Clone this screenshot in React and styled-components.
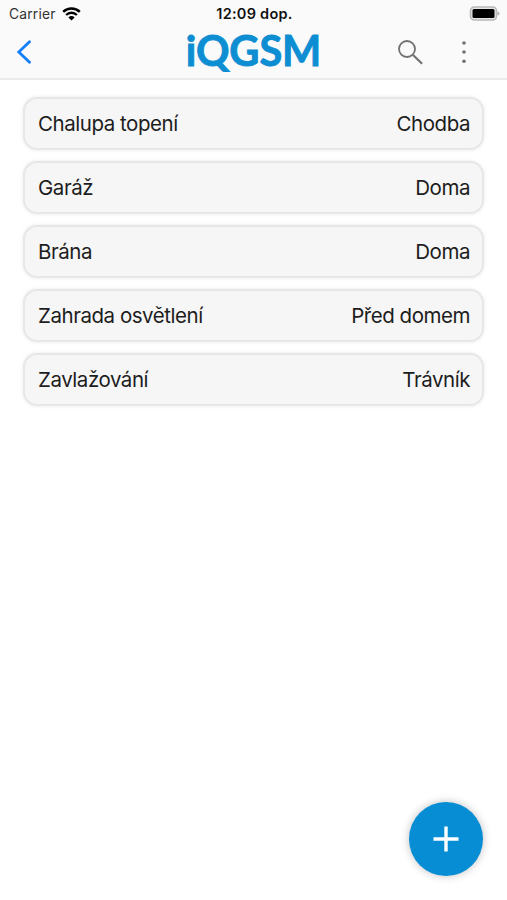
import React from 'react'
import styled, { createGlobalStyle } from 'styled-components'

const GlobalStyle = createGlobalStyle`
  * {
    box-sizing: border-box;
  }

  body {
    margin: 0;
    background: #fff;
    color: #1d1d1d;
    font-family: Inter, 'Liberation Sans', sans-serif;
  }

  button {
    padding: 0;
    border: none;
    background: none;
    cursor: pointer;
  }

  svg {
    display: block;
  }
`

const Screen = styled.div`
  height: 900px;
  overflow: hidden;
`

const Header = styled.header`
  height: 80px;
  background: #fafafa;
  border-bottom: 2px solid #ebebeb;
`

const StatusBar = styled.div`
  display: grid;
  grid-template-columns: 1fr auto 1fr;
  align-items: center;
  height: 27px;
  padding: 0 7px 0 9px;
`

const Carrier = styled.div`
  display: flex;
  align-items: center;
  gap: 6px;
  color: #333;
  font-size: 13.8px;
  letter-spacing: 0.2px;
`

const Clock = styled.div`
  color: #111;
  font-size: 14.5px;
  font-weight: 600;
  letter-spacing: 0.25px;
`

const Battery = styled.div`
  justify-self: end;
`

const NavBar = styled.nav`
  display: grid;
  grid-template-columns: 1fr auto 1fr;
  height: 51px;
  padding: 1px 40px 0 16px;
`

const BackButton = styled.button`
  justify-self: start;
  width: 18px;
  height: 48px;
`

const Logo = styled.h1`
  margin: 0;
  padding-left: 24px;
  color: #0d8dd2;
  font-family: Lato, 'Open Sans', sans-serif;
  font-size: 41.5px;
  font-weight: 700;
  line-height: 44px;
  letter-spacing: -0.1px;
  -webkit-text-stroke: 0.9px #0d8dd2;
`

const Actions = styled.div`
  display: flex;
  justify-content: flex-end;
  gap: 38px;
`

const IconButton = styled.button`
  height: 48px;
`

const DeviceList = styled.ul`
  display: flex;
  flex-direction: column;
  gap: 11px;
  margin: 0;
  padding: 17px 23px;
  list-style: none;
`

const DeviceRow = styled.li`
  display: flex;
  align-items: center;
  justify-content: space-between;
  height: 53px;
  padding: 0 12px 0 13px;
  background: #f6f6f6;
  border: 2px solid #e7e7e7;
  border-radius: 14px;
  box-shadow: 0 0 4px rgba(0, 0, 0, 0.08);
  font-size: 20.5px;
  letter-spacing: -0.46px;
`

const DeviceName = styled.span`
  white-space: nowrap;
`

const AddButton = styled.button`
  position: fixed;
  right: 24px;
  bottom: 24px;
  display: grid;
  place-items: center;
  width: 74px;
  height: 74px;
  border-radius: 50%;
  background: #068dd4;
  box-shadow: 0 0 9px rgba(0, 0, 0, 0.25);
`

const devices = [
  { name: 'Chalupa topení', place: 'Chodba' },
  { name: 'Garáž', place: 'Doma' },
  { name: 'Brána', place: 'Doma' },
  { name: 'Zahrada osvětlení', place: 'Před domem' },
  { name: 'Zavlažování', place: 'Trávník' },
]

const WifiIcon = () => (
  <svg width="19" height="14" viewBox="0 0 19 14" fill="none" stroke="#000">
    <path d="M1.2 4.9a11.8 11.8 0 0 1 16.6 0" strokeWidth="2.5" />
    <path d="M4.1 8a7.6 7.6 0 0 1 10.8 0" strokeWidth="2.3" />
    <path d="M9.5 13.6 6.4 10.4a4.4 4.4 0 0 1 6.2 0z" fill="#000" stroke="none" />
  </svg>
)

const BatteryIcon = () => (
  <svg width="31" height="15" viewBox="0 0 31 15">
    <rect x="1.5" y="1" width="26" height="13" rx="3.8" fill="#e6e6e6" stroke="#b9b9b9" strokeWidth="1.6" />
    <rect x="3.5" y="3" width="22" height="9" rx="1.5" fill="#000" />
    <path d="M28.5 5.2q2 .8 2 2.3t-2 2.3z" fill="#b0b0b0" />
  </svg>
)

const BackIcon = () => (
  <svg width="18" height="24" viewBox="0 0 18 24" fill="none">
    <path d="M13.5 1.7 2.8 12l10.7 10.3" stroke="#147efb" strokeWidth="2.8" strokeLinecap="round" />
  </svg>
)

const SearchIcon = () => (
  <svg width="25" height="25" viewBox="0 0 25 25" fill="none" stroke="#727272">
    <circle cx="9" cy="9" r="8" strokeWidth="1.8" />
    <path d="m14.8 14.8 9.3 9" strokeWidth="2.2" />
  </svg>
)

const MoreIcon = () => (
  <svg width="6" height="24" viewBox="0 0 6 24" fill="#707070">
    <circle cx="3" cy="3" r="1.8" />
    <circle cx="3" cy="12" r="1.8" />
    <circle cx="3" cy="21.2" r="1.8" />
  </svg>
)

const PlusIcon = () => (
  <svg width="26" height="26" viewBox="0 0 26 26" stroke="#fff" strokeWidth="3.4">
    <path d="M13 .5v25M.5 13h25" />
  </svg>
)

const App = () => (
  <Screen>
    <GlobalStyle />
    <Header>
      <StatusBar>
        <Carrier>
          Carrier
          <WifiIcon />
        </Carrier>
        <Clock>12:09 dop.</Clock>
        <Battery>
          <BatteryIcon />
        </Battery>
      </StatusBar>
      <NavBar>
        <BackButton aria-label="Zpět">
          <BackIcon />
        </BackButton>
        <Logo>iQGSM</Logo>
        <Actions>
          <IconButton aria-label="Hledat">
            <SearchIcon />
          </IconButton>
          <IconButton aria-label="Další">
            <MoreIcon />
          </IconButton>
        </Actions>
      </NavBar>
    </Header>
    <DeviceList>
      {devices.map((d) => (
        <DeviceRow key={d.name}>
          <DeviceName>{d.name}</DeviceName>
          <DeviceName>{d.place}</DeviceName>
        </DeviceRow>
      ))}
    </DeviceList>
    <AddButton aria-label="Přidat">
      <PlusIcon />
    </AddButton>
  </Screen>
)

export default App
